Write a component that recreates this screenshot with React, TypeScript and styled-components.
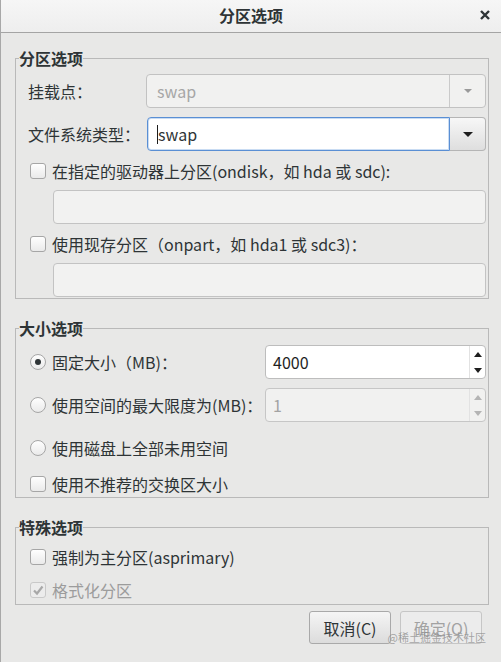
import * as React from 'react';
import styled, { createGlobalStyle } from 'styled-components';

const GlobalStyle = createGlobalStyle`
  html, body {
    margin: 0;
    padding: 0;
    background: #e8e8e7;
  }
  body {
    font-family: "Noto Sans CJK SC", "Noto Sans", sans-serif;
    text-spacing-trim: space-all;
  }
`;

const Window = styled.div`
  position: relative;
  width: 501px;
  height: 662px;
  box-sizing: border-box;
  border-left: 1px solid #a8a8a8;
  background: #e8e8e7;
  color: #2e3436;
  font-size: 16px;
  overflow: hidden;
`;

const TitleBar = styled.div`
  display: grid;
  grid-template-columns: 1fr auto 1fr;
  align-items: center;
  height: 33px;
  padding-bottom: 2px;
  box-sizing: border-box;
  border-bottom: 1px solid #a4a4a4;
  background: linear-gradient(#f6f6f6, #eeeeee);
`;

const Title = styled.div`
  grid-column: 2;
  font-weight: 700;
  font-size: 16px;
  line-height: 20px;
`;

const Close = styled.div`
  grid-column: 3;
  justify-self: end;
  display: flex;
  margin-right: 11px;
`;

const Body = styled.div`
  padding: 0 12px 0 14px;
`;

const Frame = styled.fieldset<{ $top: number }>`
  margin: ${p => p.$top}px 0 0;
  padding: 0;
  border: 1px solid #b9b9b9;
  min-inline-size: 0;
`;

const Legend = styled.legend`
  margin-left: 3px;
  padding: 0;
  font-weight: 700;
  font-size: 16px;
  line-height: 20px;
  color: #2e3436;
`;

const FrameBody = styled.div<{ $pt: number; $pb: number; $gap: number }>`
  display: flex;
  flex-direction: column;
  gap: ${p => p.$gap}px;
  padding: ${p => p.$pt}px 2px ${p => p.$pb}px 12px;
`;

const FieldRow = styled.div`
  display: grid;
  grid-template-columns: 118px 1fr;
  align-items: center;
  height: 34px;
`;

const Label = styled.span`
  line-height: 20px;
  white-space: nowrap;
`;

const Combo = styled.div`
  display: flex;
  height: 34px;
  box-sizing: border-box;
  border: 1px solid #c2c2c2;
  border-radius: 4px;
  background: #f1f1f0;
`;

const ComboText = styled.div`
  flex: 1;
  padding-left: 10px;
  line-height: 32px;
  color: #a6a6a6;
`;

const ComboArrow = styled.div`
  width: 35px;
  border-left: 1px solid #cacaca;
  display: flex;
  align-items: center;
  justify-content: center;
`;

const Tri = styled.span<{ $up?: boolean; $color: string; $w?: number }>`
  width: 0;
  height: 0;
  border-left: ${p => (p.$w ?? 8) / 2}px solid transparent;
  border-right: ${p => (p.$w ?? 8) / 2}px solid transparent;
  ${p => (p.$up ? 'border-bottom' : 'border-top')}: ${p => Math.round((p.$w ?? 8) / 2)}px solid ${p => p.$color};
`;

const EntryCombo = styled.div`
  display: flex;
  height: 34px;
  margin-left: 1px;
`;

const Entry = styled.div`
  flex: 1;
  display: flex;
  align-items: center;
  box-sizing: border-box;
  padding-left: 9px;
  border: 1px solid #5a8fd4;
  border-radius: 4px 0 0 4px;
  background: #ffffff;
  box-shadow: inset 0 0 0 1px #c9dcf3;
`;

const Caret = styled.span`
  width: 1px;
  height: 19px;
  background: #1c1c1c;
`;

const ComboButton = styled.div`
  width: 36px;
  box-sizing: border-box;
  border: 1px solid #b5b5b5;
  border-left: none;
  border-radius: 0 4px 4px 0;
  background: linear-gradient(#f7f7f7, #dedede);
  display: flex;
  align-items: center;
  justify-content: center;
`;

const CheckRow = styled.label<{ $h: number; $muted?: boolean }>`
  display: flex;
  align-items: center;
  gap: 6px;
  height: ${p => p.$h}px;
  margin-left: 2px;
  white-space: nowrap;
  color: ${p => (p.$muted ? '#9c9c9c' : '#2e3436')};
`;

const Box = styled.span<{ $round?: boolean; $disabled?: boolean }>`
  flex: none;
  width: 16px;
  height: 16px;
  box-sizing: border-box;
  border: 1px solid ${p => (p.$disabled ? '#c9c9c9' : '#a6a6a6')};
  border-radius: ${p => (p.$round ? '50%' : '3px')};
  background: ${p => (p.$disabled ? '#ececec' : 'linear-gradient(#fefefe, #eaeaea)')};
  display: flex;
  align-items: center;
  justify-content: center;
`;

const Dot = styled.span`
  width: 6px;
  height: 6px;
  border-radius: 50%;
  background: #2e3436;
`;

const SubEntry = styled.div`
  height: 34px;
  margin-left: 25px;
  box-sizing: border-box;
  border: 1px solid #c3c3c3;
  border-radius: 4px;
  background: #f2f2f1;
`;

const SizeRow = styled.div<{ $h: number }>`
  display: grid;
  grid-template-columns: 237px 1fr;
  align-items: center;
  height: ${p => p.$h}px;
`;

const Spin = styled.div<{ $disabled?: boolean }>`
  display: flex;
  height: 34px;
  box-sizing: border-box;
  border: 1px solid ${p => (p.$disabled ? '#c6c6c6' : '#bdbdbd')};
  border-radius: 4px;
  background: ${p => (p.$disabled ? '#f1f1f0' : '#ffffff')};
`;

const SpinValue = styled.div<{ $disabled?: boolean }>`
  flex: 1;
  padding-left: 7px;
  line-height: 32px;
  color: ${p => (p.$disabled ? '#a3a3a3' : '#1e1e1e')};
`;

const SpinButtons = styled.div`
  width: 15px;
  display: flex;
  flex-direction: column;
  border-left: 1px solid #e2e2e2;
`;

const SpinHalf = styled.div`
  flex: 1;
  display: flex;
  align-items: center;
  justify-content: center;
`;

const ButtonRow = styled.div`
  display: flex;
  justify-content: flex-end;
  gap: 9px;
  margin-top: 6px;
  padding-right: 7px;
`;

const Button = styled.button<{ $disabled?: boolean }>`
  width: 82px;
  height: 33px;
  padding: 0;
  box-sizing: border-box;
  border: 1px solid ${p => (p.$disabled ? '#c6c6c6' : '#a9a9a9')};
  border-radius: 3px;
  background: ${p => (p.$disabled ? '#ececec' : 'linear-gradient(#f5f5f5, #dcdcdc)')};
  color: ${p => (p.$disabled ? '#a2a2a2' : '#2e3436')};
  font-family: inherit;
  font-size: 16px;
`;

const Watermark = styled.div`
  position: absolute;
  top: 629px;
  right: 15px;
  font-size: 11px;
  line-height: 16px;
  color: rgba(140, 140, 140, 0.75);
  pointer-events: none;
`;

const Check = ({ color }: { color: string }) => (
  <svg width='12' height='12' viewBox='0 0 12 12'>
    <path d='M2 6.5 L5 9.5 L10.5 2.5' fill='none' stroke={color} strokeWidth='2.2' />
  </svg>
);

const SpinBox = (props: { value: string; disabled?: boolean }) => {
  const c = props.disabled ? '#b4b4b4' : '#1e1e1e';
  return (
    <Spin $disabled={props.disabled}>
      <SpinValue $disabled={props.disabled}>{props.value}</SpinValue>
      <SpinButtons>
        <SpinHalf>
          <Tri $up $color={c} $w={9} />
        </SpinHalf>
        <SpinHalf>
          <Tri $color={c} $w={9} />
        </SpinHalf>
      </SpinButtons>
    </Spin>
  );
};

const App: React.FC = () => (
  <Window>
    <GlobalStyle />
    <TitleBar>
      <Title>分区选项</Title>
      <Close>
        <svg width='10' height='10' viewBox='0 0 10 10'>
          <path d='M1 1 L9 9 M9 1 L1 9' stroke='#2e3436' strokeWidth='2.4' />
        </svg>
      </Close>
    </TitleBar>
    <Body>
      <Frame $top={15}>
        <Legend>分区选项</Legend>
        <FrameBody $pt={6} $pb={1} $gap={9}>
          <FieldRow>
            <Label>挂载点：</Label>
            <Combo>
              <ComboText>swap</ComboText>
              <ComboArrow>
                <Tri $color='#9a9a9a' />
              </ComboArrow>
            </Combo>
          </FieldRow>
          <FieldRow>
            <Label>文件系统类型：</Label>
            <EntryCombo>
              <Entry>
                <Caret />
                <span>swap</span>
              </Entry>
              <ComboButton>
                <Tri $color='#1e1e1e' $w={10} />
              </ComboButton>
            </EntryCombo>
          </FieldRow>
          <CheckRow $h={21}>
            <Box />
            在指定的驱动器上分区(ondisk，如 hda 或 sdc):
          </CheckRow>
          <SubEntry />
          <CheckRow $h={21}>
            <Box />
            使用现存分区（onpart，如 hda1 或 sdc3)：
          </CheckRow>
          <SubEntry />
        </FrameBody>
      </Frame>

      <Frame $top={19}>
        <Legend>大小选项</Legend>
        <FrameBody $pt={7} $pb={3} $gap={9}>
          <SizeRow $h={34}>
            <CheckRow $h={21}>
              <Box $round>
                <Dot />
              </Box>
              固定大小（MB)：
            </CheckRow>
            <SpinBox value='4000' />
          </SizeRow>
          <SizeRow $h={34}>
            <CheckRow $h={21}>
              <Box $round />
              使用空间的最大限度为(MB)：
            </CheckRow>
            <SpinBox value='1' disabled />
          </SizeRow>
          <SizeRow $h={34}>
            <CheckRow $h={21}>
              <Box $round />
              使用磁盘上全部未用空间
            </CheckRow>
          </SizeRow>
          <CheckRow $h={20}>
            <Box />
            使用不推荐的交换区大小
          </CheckRow>
        </FrameBody>
      </Frame>

      <Frame $top={19}>
        <Legend>特殊选项</Legend>
        <FrameBody $pt={10} $pb={4} $gap={12}>
          <CheckRow $h={20}>
            <Box />
            强制为主分区(asprimary)
          </CheckRow>
          <CheckRow $h={21} $muted>
            <Box $disabled>
              <Check color='#a8a8a8' />
            </Box>
            格式化分区
          </CheckRow>
        </FrameBody>
      </Frame>

      <ButtonRow>
        <Button>取消(C)</Button>
        <Button $disabled>确定(O)</Button>
      </ButtonRow>
    </Body>
    <Watermark>@稀土掘金技术社区</Watermark>
  </Window>
);

export default App;
